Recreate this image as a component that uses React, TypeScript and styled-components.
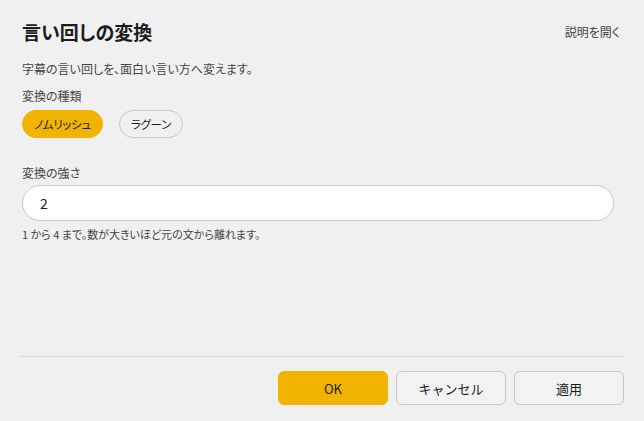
import styled, { createGlobalStyle } from 'styled-components';
import { useState } from 'react';

const Colors = {
  page: '#f0f0f0',
  text: '#1c1c1c',
  sub: '#454545',
  border: '#c9c9c9',
  divider: '#d8d8d8',
  accent: '#f0b400',
  white: '#ffffff',
};

const GlobalStyle = createGlobalStyle`
  html, body {
    margin: 0;
    padding: 0;
    background: ${Colors.page};
  }
  body {
    font-family: "Noto Sans CJK JP", "Noto Sans", sans-serif;
    font-feature-settings: "palt";
    color: ${Colors.text};
  }
`;

const Dialog = styled.div`
  height: 100vh;
  display: flex;
  flex-direction: column;
  box-sizing: border-box;
`;

const Body = styled.div`
  flex: 1;
  padding: 18px 30px 0 22px;
`;

const Header = styled.div`
  display: flex;
  align-items: center;
  justify-content: space-between;
`;

const Title = styled.h1`
  margin: 0;
  font-size: 19px;
  line-height: 28px;
  font-weight: 700;
  color: ${Colors.text};
`;

const HelpLink = styled.a`
  font-size: 12px;
  line-height: 18px;
  color: ${Colors.sub};
  margin-right: -6px;
  cursor: pointer;
`;

const Description = styled.p`
  margin: 14px 0 0;
  font-size: 12px;
  line-height: 18px;
  color: ${Colors.sub};
`;

const Label = styled.div<{ $top: number }>`
  margin-top: ${(p) => p.$top}px;
  font-size: 12px;
  line-height: 18px;
  color: ${Colors.sub};
`;

const ChipRow = styled.div`
  display: flex;
  gap: 16px;
  margin-top: 5px;
`;

const Chip = styled.button<{ $selected?: boolean }>`
  height: 28px;
  padding: 0 11px;
  border-radius: 14px;
  font-family: inherit;
  font-feature-settings: "palt";
  font-size: 11.5px;
  letter-spacing: -0.3px;
  color: ${Colors.text};
  background: ${(p) => (p.$selected ? Colors.accent : Colors.page)};
  border: 1px solid ${(p) => (p.$selected ? Colors.accent : Colors.border)};
  cursor: pointer;
`;

const Input = styled.input`
  display: block;
  box-sizing: border-box;
  width: 100%;
  height: 36px;
  margin-top: 3px;
  padding: 0 17px;
  border: 1px solid ${Colors.border};
  border-radius: 18px;
  background: ${Colors.white};
  font-family: inherit;
  font-size: 14px;
  color: ${Colors.text};
  outline: none;
`;

const Hint = styled.div`
  margin-top: 4px;
  font-size: 11px;
  line-height: 18px;
  color: ${Colors.sub};
`;

const Footer = styled.div`
  margin: 0 20px;
  padding: 14px 0 16px;
  border-top: 1px solid ${Colors.divider};
  display: flex;
  justify-content: flex-end;
  gap: 8px;
`;

const Button = styled.button<{ $primary?: boolean }>`
  width: 110px;
  height: 34px;
  border-radius: 6px;
  font-family: inherit;
  font-size: 13px;
  color: ${Colors.text};
  background: ${(p) => (p.$primary ? Colors.accent : '#f2f2f2')};
  border: 1px solid ${(p) => (p.$primary ? Colors.accent : Colors.border)};
  cursor: pointer;
`;

export default function App() {
  const [kind, setKind] = useState('nomu');
  const [strength, setStrength] = useState('2');

  return (
    <>
      <GlobalStyle />
      <Dialog>
        <Body>
          <Header>
            <Title>言い回しの変換</Title>
            <HelpLink>説明を開く</HelpLink>
          </Header>
          <Description>字幕の言い回しを、面白い言い方へ変えます。</Description>

          <Label $top={9}>変換の種類</Label>
          <ChipRow>
            <Chip $selected={kind === 'nomu'} onClick={() => setKind('nomu')}>ノムリッシュ</Chip>
            <Chip $selected={kind === 'lagoon'} onClick={() => setKind('lagoon')}>ラグーン</Chip>
          </ChipRow>

          <Label $top={26}>変換の強さ</Label>
          <Input value={strength} onChange={(e) => setStrength(e.target.value)} />
          <Hint>1 から 4 まで。数が大きいほど元の文から離れます。</Hint>
        </Body>
        <Footer>
          <Button $primary>OK</Button>
          <Button>キャンセル</Button>
          <Button>適用</Button>
        </Footer>
      </Dialog>
    </>
  );
}
